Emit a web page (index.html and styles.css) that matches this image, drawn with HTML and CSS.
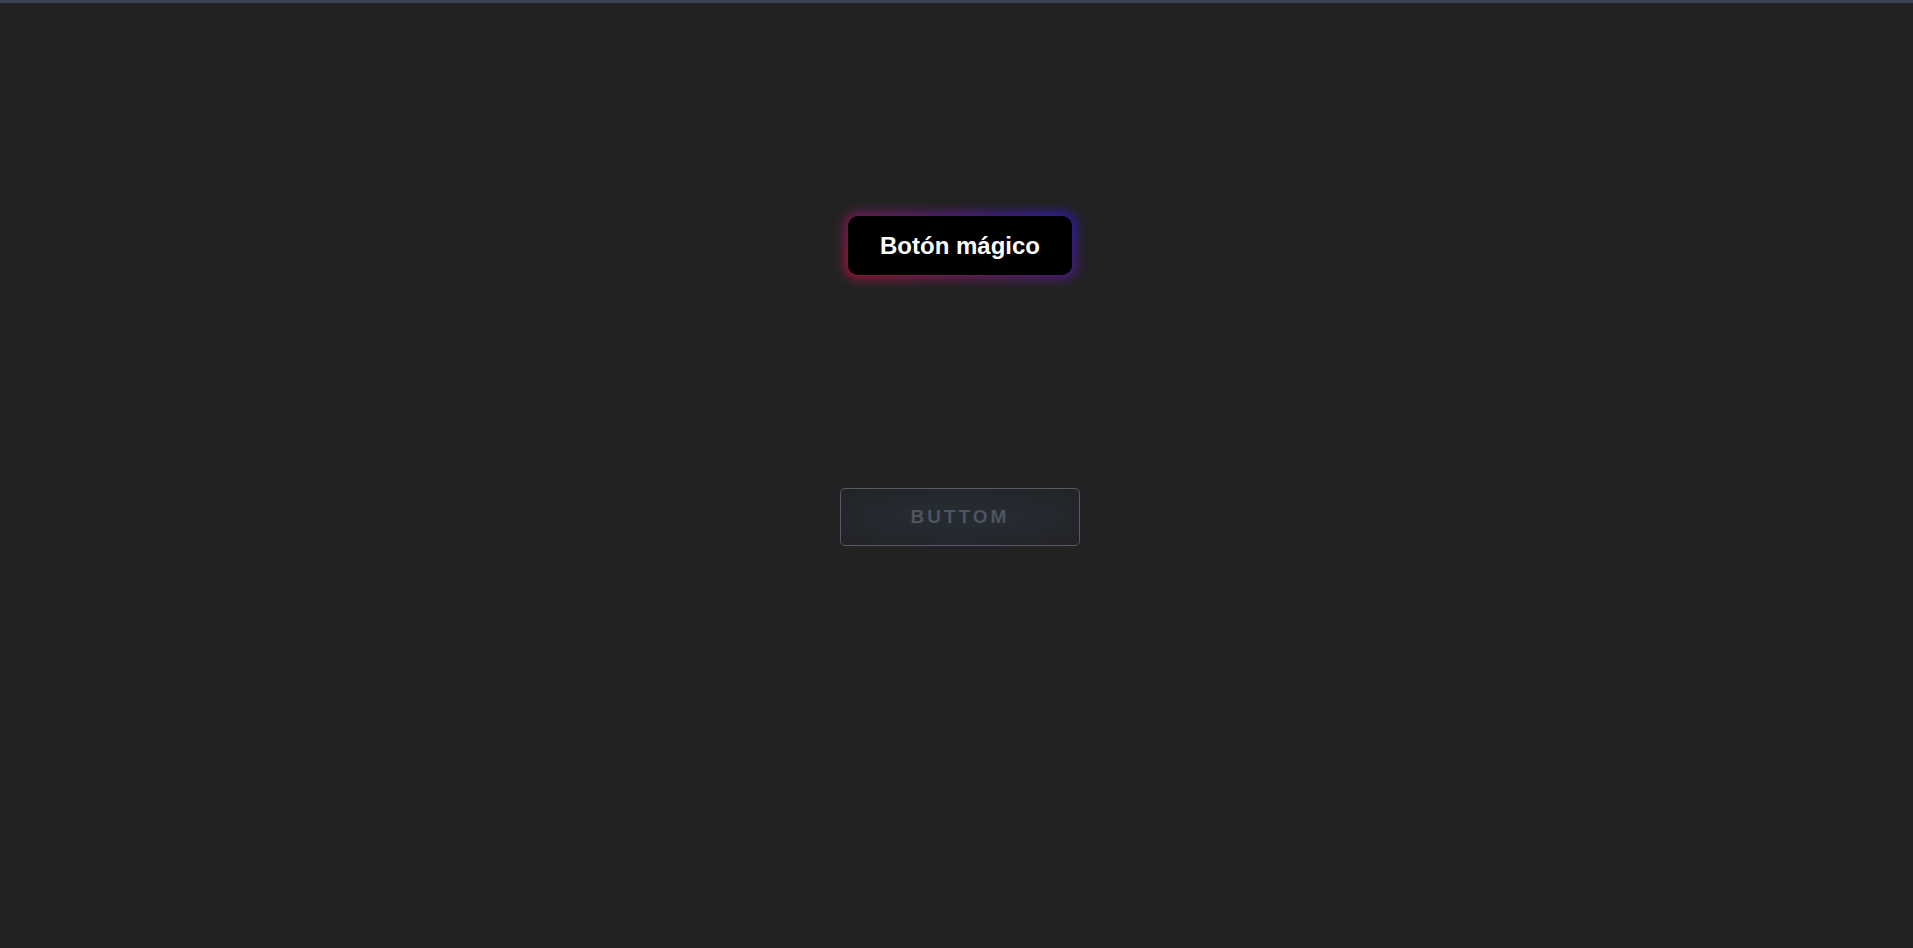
FILE: index.html
```html
<!DOCTYPE html>
<html lang="es">
<head>
<meta charset="utf-8">
<title>Botones</title>
<link rel="stylesheet" href="styles.css">
</head>
<body>
<div class="topbar"></div>
<main class="stage">
  <button class="magic">Botón mágico</button>
  <button class="ghost">BUTTOM</button>
</main>
</body>
</html>
```
FILE: styles.css
```css
html, body {
  margin: 0;
  padding: 0;
  background: #222222;
  height: 100%;
}
body {
  font-family: "Liberation Sans", Arial, sans-serif;
}
.topbar {
  height: 3px;
  background: #3b4252;
}
.stage {
  display: flex;
  flex-direction: column;
  align-items: center;
  padding-top: 213px;
  padding-left: 7px;
}
.magic {
  position: relative;
  z-index: 0;
  width: 224px;
  height: 59px;
  border: none;
  border-radius: 10px;
  background: #000;
  color: #fff;
  font-family: "Liberation Sans", Arial, sans-serif;
  font-weight: bold;
  font-size: 24px;
  padding-top: 2px;
  cursor: pointer;
}
.magic::before {
  content: "";
  position: absolute;
  inset: -3px;
  border-radius: 12px;
  background: linear-gradient(30deg, #d0103c 0%, #7a1a7a 45%, #2a18e0 100%);
  filter: blur(6px);
  opacity: 0.85;
  z-index: -2;
}
.magic::after {
  content: "";
  position: absolute;
  inset: 0;
  border-radius: 10px;
  background: #000;
  z-index: -1;
}
.ghost {
  margin-top: 213px;
  width: 240px;
  height: 58px;
  border: 1px solid #555a64;
  border-radius: 5px;
  background: radial-gradient(ellipse at center, #262a31 30%, #222326 100%);
  color: #4d5462;
  font-family: "Liberation Sans", Arial, sans-serif;
  font-weight: bold;
  font-size: 19px;
  letter-spacing: 3px;
  padding-left: 6px;
  cursor: pointer;
}
```
